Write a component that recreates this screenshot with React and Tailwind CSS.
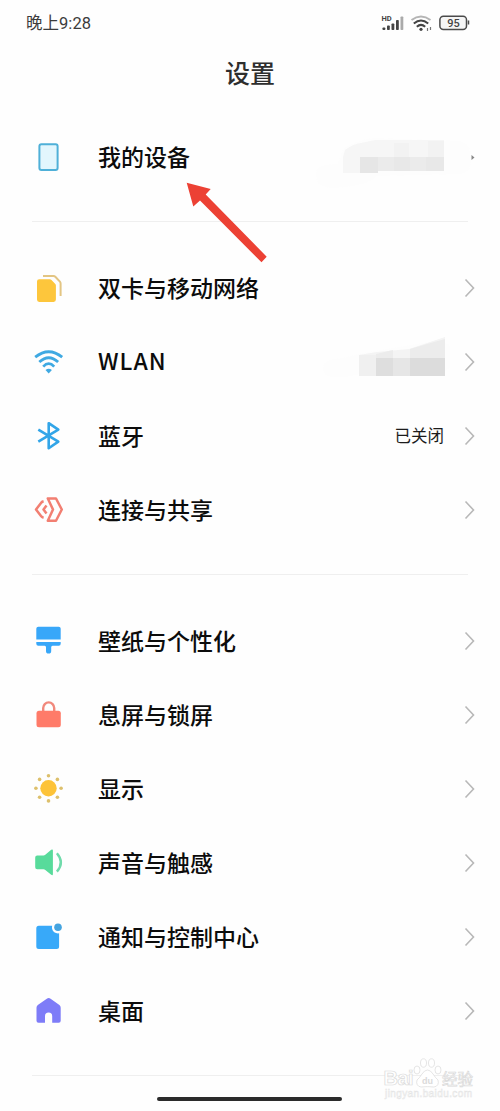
import React from "react";

const DeviceIcon = () => (
  <svg viewBox="0 0 40 40" className="w-10 h-10">
    <rect x="11.4" y="7.2" width="18.2" height="25.8" rx="2" fill="#e2f6fd" stroke="#4fb0d8" strokeWidth="2" />
  </svg>
);

const SimIcon = () => (
  <svg viewBox="0 0 40 40" className="w-10 h-10">
    <path d="M15 8h10.5q1 0 1.8.8l4.600 4.800q.7.800.7 1.800V28" fill="none" stroke="#e3c583" strokeWidth="2" />
    <path d="M11.200 11.300h10.600q1 0 1.700.7l3.600 3.800q.8.800.8 1.800v14q0 2.300-2.300 2.300H11.200Q9 33.900 9 31.600v-18q0-2.300 2.200-2.300z" fill="#fdc63c" />
  </svg>
);

const WifiIcon = () => (
  <svg viewBox="0 0 40 40" className="w-10 h-10">
    <g fill="none" stroke="#3fa9e2" strokeWidth="2.8">
      <path d="M7.200 15.200Q20.700 4.200 34.200 15.200" />
      <path d="M11.300 20Q20.700 11.500 30.100 20" />
      <path d="M15.200 24.600Q20.700 18.800 26.200 24.600" />
    </g>
    <path d="M17.500 28q3.200-2.600 6.400 0l-3.200 3.600z" fill="#3fa9e2" />
  </svg>
);

const BluetoothIcon = () => (
  <svg viewBox="0 0 40 40" className="w-10 h-10">
    <path d="M10.300 13.600l20 12-9.600 6.600V7.200l9.600 6.400-20 12" fill="none" stroke="#32a5e8" strokeWidth="2.600" strokeLinejoin="round" />
  </svg>
);

const ShareIcon = () => (
  <svg viewBox="0 0 40 40" className="w-10 h-10">
    <g fill="none" stroke="#f27f72" strokeWidth="2.500" strokeLinejoin="round">
      <path d="M15.600 11.300q-1.800.5-2.600 1.700l-5 6.500 5 6.500q.8 1.200 2.600 1.700" />
      <path d="M18.500 15.500l-3 4 3 4" />
      <path d="M19.800 8.500h8.200l5.800 11-5.800 11.300h-8.200l5.200-11.300z" />
    </g>
  </svg>
);

const BrushIcon = () => (
  <svg viewBox="0 0 40 40" className="w-10 h-10" fill="#38a7f9">
    <path d="M10.300 5.700h20.400q2 0 2 2v10.900H8.300V7.700q0-2 2-2z" />
    <path d="M8.300 21h24.400v1.700q0 2-2 2h-6.200q-1.300.3-1.300 1.500V30q0 2.600-2.600 2.600T18 30v-3.800q0-1.200-1.300-1.500h-6.400q-2 0-2-2z" />
  </svg>
);

const LockIcon = () => (
  <svg viewBox="0 0 40 40" className="w-10 h-10">
    <path d="M15.200 18v-5a5.500 5.600 0 0 1 11 0v5" fill="none" stroke="#f1897c" strokeWidth="2.400" />
    <rect x="8.500" y="15.800" width="24.300" height="16.400" rx="2.500" fill="#ff7b69" />
  </svg>
);

const SunIcon = () => (
  <svg viewBox="0 0 40 40" className="w-10 h-10">
    <circle cx="20.500" cy="19.300" r="8.200" fill="#fdc338" />
    <g fill="#ddc06c">
      <circle cx="20.500" cy="6.700" r="1.800" />
      <circle cx="20.500" cy="31.900" r="1.800" />
      <circle cx="7.900" cy="19.300" r="1.800" />
      <circle cx="33.100" cy="19.300" r="1.800" />
      <circle cx="11.600" cy="10.400" r="1.800" />
      <circle cx="29.400" cy="10.400" r="1.800" />
      <circle cx="11.600" cy="28.200" r="1.800" />
      <circle cx="29.400" cy="28.200" r="1.800" />
    </g>
  </svg>
);

const SoundIcon = () => (
  <svg viewBox="0 0 40 40" className="w-10 h-10">
    <path d="M9.200 12.400h6.300q1 0 1.800-.7l5.900-4.900q1.700-1.100 1.700.8v23.400q0 1.900-1.700.8l-5.900-4.900q-.8-.7-1.800-.7H9.200q-2 0-2-2v-9.800q0-2 2-2z" fill="#58db9b" />
    <path d="M28.900 10.200q8 9.200 0 18.400" fill="none" stroke="#70dbab" strokeWidth="2.400" />
  </svg>
);

const NotifyIcon = () => (
  <svg viewBox="0 0 40 40" className="w-10 h-10">
    <path d="M10.800 8.700h13.400a6 6 0 0 0 6.900 7.600v13.200q0 2.500-2.500 2.500H10.800q-2.500 0-2.500-2.500V11.200q0-2.500 2.500-2.500z" fill="#38a9f9" />
    <circle cx="30" cy="10.300" r="3.800" fill="#44a4e0" />
  </svg>
);

const HomeIcon = () => (
  <svg viewBox="0 0 40 40" className="w-10 h-10">
    <path d="M18.800 7.700q1.900-1.400 3.800 0l8.800 6.400q1.300 1 1.300 2.600v13q0 2-2 2h-6.500v-6.500a3.600 3.600 0 0 0-7.200 0v6.500h-6.500q-2 0-2-2v-13q0-1.600 1.300-2.600z" fill="#7e7cf8" />
  </svg>
);

const Chevron = () => (
  <svg viewBox="0 0 12 20" className="w-3 h-5 ml-5">
    <path d="M1.500 1.500L9.500 10l-8 8.500" fill="none" stroke="#b8b8b8" strokeWidth="1.600" />
  </svg>
);

// blurred-out model name, it also hides most of the chevron
const DeviceMosaic = () => (
  <svg viewBox="0 0 160 74" className="w-40 h-[74px]">
    <path d="M0 54q0-10 22-10l6-16q16-9 30-10l86 3q11 4 11 18t-11 15l-84 2q-8 10-42 12-18 0-18-14z" fill="#fdfdfd" />
    <path d="M27 37l2-7q8-6 16-7l14-3h69v17z" fill="#f6f6f6" />
    <path d="M78 23h15v14H78zM112 21h16v16h-16z" fill="#f2f2f2" />
    <path d="M27 37h17v16H27z" fill="#f6f6f6" />
    <path d="M44 37h18v16H44z" fill="#e6e6e6" />
    <path d="M62 37h66v14H62z" fill="#ebebeb" />
    <path d="M78 37h16v14H78zM110 37h18v14h-18z" fill="#e8e8e8" />
    <path d="M155.500 35l3 2.500-3 2.500z" fill="#888" />
  </svg>
);

const WlanMosaic = () => (
  <svg viewBox="0 0 130 74" className="w-[130px] h-[74px] -mr-[7px]">
    <path d="M2 44q0-10 20-11l20-5 60-10q26-4 27 5v18q-3 8-30 8H40l-15 3Q2 54 2 44z" fill="#fdfdfd" />
    <path d="M38 30l18-3 32-3 36-12v22H38z" fill="#f4f4f4" />
    <path d="M55 31V29l17-4v9H55zM89 24l17-5 18-5v20H89z" fill="#ececec" />
    <path d="M38 30h17v21H38z" fill="#f0f0f0" />
    <path d="M55 33h17v18H55z" fill="#dedede" />
    <path d="M72 33h17v18H72z" fill="#e6e6e6" />
    <path d="M89 33h35v18H89z" fill="#dcdcdc" />
  </svg>
);

const StatusIcons = () => (
  <svg viewBox="0 0 94 20" className="w-[94px] h-5">
    <text x="1.500" y="8" fontSize="7.500" fontWeight="700" fill="#444" fontFamily="Roboto, sans-serif">HD</text>
    <g fill="#444">
      <rect x="2.500" y="14.500" width="2.800" height="2.500" rx=".8" />
      <rect x="7" y="12.500" width="2.800" height="4.500" rx=".8" />
      <rect x="11.500" y="10.500" width="2.800" height="6.500" rx=".8" />
      <rect x="16" y="7" width="2.800" height="10" rx=".8" />
      <rect x="20.500" y="3.500" width="2.800" height="13.500" rx=".8" fill="#aaa" />
    </g>
    <g fill="none" strokeWidth="2">
      <path d="M31.500 7Q41 .2 50.500 7" stroke="#b5b5b5" />
      <path d="M33.800 10.500Q41 4.500 48.200 10.500" stroke="#444" />
      <path d="M36.800 13.800Q41 10 45.200 13.800" stroke="#444" />
    </g>
    <circle cx="41" cy="16.300" r="1.600" fill="#444" />
    <path d="M47.500 15v3M50.500 14v3" stroke="#777" strokeWidth="1.200" />
    <rect x="59.900" y="3.200" width="26.600" height="13.300" rx="3.500" fill="#f5f5f5" stroke="#4a4a4a" strokeWidth="1.500" />
    <path d="M88.500 7.500v4" stroke="#4a4a4a" strokeWidth="1.500" />
    <text x="73.500" y="13.700" textAnchor="middle" fontSize="11" fontWeight="500" fill="#444" fontFamily="Roboto, sans-serif">95</text>
  </svg>
);

const Watermark = () => (
  <svg viewBox="0 0 100 50" className="w-[100px] h-[50px]">
    <g fill="#fff" stroke="#dadada" strokeWidth=".7">
      <text x="2.500" y="34" fontSize="20" fontFamily="Liberation Sans, sans-serif" fontWeight="700" textLength="30">Bai</text>
      <ellipse cx="36" cy="19" rx="3" ry="4" />
      <ellipse cx="42.500" cy="12" rx="3" ry="4.200" />
      <ellipse cx="50.500" cy="12" rx="3" ry="4.200" />
      <ellipse cx="57" cy="19" rx="3" ry="4" />
      <path d="M46.500 19q3 0 5.500 4t5 6q1.500 6-4 7-6.500-.800-13 0-5.500-1-4-7 2.500-2 5-6t5.500-4z" />
      <text x="61" y="33.500" fontSize="15.500" fontFamily="Noto Sans CJK SC, sans-serif">经验</text>
    </g>
    <text x="41" y="33" fontSize="9" fontWeight="700" fill="#dadada" fontFamily="Liberation Sans, sans-serif">du</text>
    <text x="4" y="46" textLength="87" fontSize="10" fill="#fff" stroke="#e4e4e4" strokeWidth=".5" fontFamily="Liberation Sans, sans-serif">jingyan.baidu.com</text>
  </svg>
);

const sections = [
  [{ label: "我的设备", icon: <DeviceIcon />, extra: <DeviceMosaic />, noChevron: true }],
  [
    { label: "双卡与移动网络", icon: <SimIcon /> },
    { label: "WLAN", icon: <WifiIcon />, extra: <WlanMosaic />, latin: true },
    { label: "蓝牙", icon: <BluetoothIcon />, value: "已关闭" },
    { label: "连接与共享", icon: <ShareIcon /> },
  ],
  [
    { label: "壁纸与个性化", icon: <BrushIcon /> },
    { label: "息屏与锁屏", icon: <LockIcon /> },
    { label: "显示", icon: <SunIcon /> },
    { label: "声音与触感", icon: <SoundIcon /> },
    { label: "通知与控制中心", icon: <NotifyIcon /> },
    { label: "桌面", icon: <HomeIcon /> },
  ],
];

const Row = ({ label, icon, value, extra, noChevron, latin }) => (
  <div className="flex items-center h-[74px] pl-7 pr-[24px]">
    {icon}
    <span
      className={
        "ml-[30px] flex-1 whitespace-nowrap text-[23px] leading-none font-medium text-[#0c0c0c] " +
        (latin ? "tracking-[1px] pb-[3px]" : "pb-[2px]")
      }
    >
      {label}
    </span>
    {value && <span className="pb-px text-[16.5px] leading-none text-[#1c1c1c]">{value}</span>}
    {extra}
    {!noChevron && <Chevron />}
  </div>
);

const App = () => {
  return (
    <div className="relative flex flex-col w-[500px] h-[1111px] overflow-hidden bg-[#fefefe] font-['Noto_Sans_CJK_SC',sans-serif]">
      <div className="flex items-center justify-between h-[46px] pl-[26px] pr-[26px]">
        <span className="text-[16.5px] leading-none text-[#3c3c3c]">
          晚上<span className="font-[Roboto,sans-serif] tracking-[0.1px]">9:28</span>
        </span>
        <StatusIcons />
      </div>
      <h1 className="flex items-center justify-center h-[52px] mb-[22px] text-[25px] leading-none font-medium text-[#2e2e2e]">
        设置
      </h1>

      {sections.map((rows, i) => (
        <div key={i}>
          {rows.map((row) => (
            <Row key={row.label} {...row} />
          ))}
          <div className="h-px mx-8 mt-[27px] mb-[29px] bg-[#efefef]" />
        </div>
      ))}

      <svg viewBox="0 0 90 90" className="absolute left-[182px] top-[178px] w-[90px] h-[90px]">
        <path d="M4.700 4.700L28.700 11l-5 5.500 61 62.200-5.200 5.600L18 22.500 11.300 28.500z" fill="#ec4134" />
      </svg>
      <div className="absolute left-[381px] top-[1051px]">
        <Watermark />
      </div>
      <div className="absolute left-[157px] top-[1097px] w-[185px] h-1 rounded-full bg-[#2b2b2b]" />
    </div>
  );
};

export default App;
